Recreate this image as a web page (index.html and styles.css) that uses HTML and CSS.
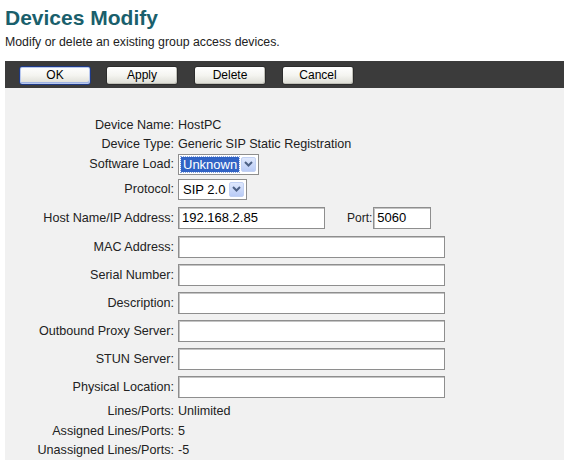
FILE: index.html
```html
<!DOCTYPE html>
<html>
<head>
<meta charset="utf-8">
<link rel="stylesheet" href="styles.css">
</head>
<body>
<h1 class="title">Devices Modify</h1>
<p class="subtitle">Modify or delete an existing group access devices.</p>
<div class="toolbar">
  <button class="btn btn-focus">OK</button>
  <button class="btn">Apply</button>
  <button class="btn">Delete</button>
  <button class="btn">Cancel</button>
</div>
<div class="panel">
  <div class="form">
    <div class="lbl r-text">Device Name:</div><div class="val r-text">HostPC</div>
    <div class="lbl r-text">Device Type:</div><div class="val r-text">Generic SIP Static Registration</div>
    <div class="lbl r-sel1">Software Load:</div>
    <div class="val r-sel1">
      <div class="select sel-sw"><span class="sel-text sel-hl">Unknown</span><span class="sel-arrow"><svg width="9" height="6" viewBox="0 0 9 6"><path d="M1 1 L4.5 4.5 L8 1" fill="none" stroke="#4d6185" stroke-width="2"/></svg></span></div>
    </div>
    <div class="lbl r-sel2">Protocol:</div>
    <div class="val r-sel2">
      <div class="select sel-proto"><span class="sel-text">SIP 2.0</span><span class="sel-arrow"><svg width="9" height="6" viewBox="0 0 9 6"><path d="M1 1 L4.5 4.5 L8 1" fill="none" stroke="#4d6185" stroke-width="2"/></svg></span></div>
    </div>
    <div class="lbl r-host">Host Name/IP Address:</div>
    <div class="val r-host">
      <div class="input in-host">192.168.2.85</div>
      <span class="port-lbl">Port:</span>
      <div class="input in-port">5060</div>
    </div>
    <div class="lbl r-field">MAC Address:</div><div class="val r-field"><div class="input in-long"></div></div>
    <div class="lbl r-field">Serial Number:</div><div class="val r-field"><div class="input in-long"></div></div>
    <div class="lbl r-field">Description:</div><div class="val r-field"><div class="input in-long"></div></div>
    <div class="lbl r-field">Outbound Proxy Server:</div><div class="val r-field"><div class="input in-long"></div></div>
    <div class="lbl r-field">STUN Server:</div><div class="val r-field"><div class="input in-long"></div></div>
    <div class="lbl r-field">Physical Location:</div><div class="val r-field"><div class="input in-long"></div></div>
    <div class="lbl r-lines">Lines/Ports:</div><div class="val r-lines">Unlimited</div>
    <div class="lbl r-text">Assigned Lines/Ports:</div><div class="val r-text">5</div>
    <div class="lbl r-text">Unassigned Lines/Ports:</div><div class="val r-text">-5</div>
  </div>
</div>
</body>
</html>
```

FILE: styles.css
```css
html, body {
  margin: 0;
  padding: 0;
  background: #ffffff;
  font-family: "Liberation Sans", Arial, sans-serif;
  font-size: 12px;
  color: #222;
}

.title {
  margin: 0;
  padding: 5px 0 0 5px;
  height: 26px;
  font-size: 21px;
  line-height: 26px;
  font-weight: bold;
  color: #1a5f6c;
}

.subtitle {
  margin: 0;
  padding: 3px 0 0 5px;
  height: 27px;
  line-height: 16px;
  font-size: 12.3px;
  color: #222;
}

.toolbar {
  margin-left: 5px;
  height: 27px;
  background: #3b3b3b;
  display: flex;
  align-items: flex-start;
  padding: 5px 0 0 14px;
  box-sizing: border-box;
  gap: 15px;
}

.btn {
  width: 72px;
  height: 19px;
  padding: 0;
  margin: 0;
  border: 1px solid #2c2c2c;
  border-radius: 3px;
  background: linear-gradient(#ffffff 0%, #f4f4f0 50%, #dcdcd4 100%);
  font-family: "Liberation Sans", Arial, sans-serif;
  font-size: 12px;
  color: #000;
  line-height: 17px;
  box-shadow: inset -1px -1px 0 #c0c0b8;
}

.btn + .btn + .btn {
  margin-left: 1px;
}

.btn-focus {
  border-color: #1f3a86;
  box-shadow: inset 0 0 0 1px #b8c8ee, inset -1px -2px 0 #9fb3e3;
}

.panel {
  margin-left: 5px;
  height: 372px;
  background: #f1f1f1;
  padding-top: 27px;
  box-sizing: border-box;
  font-size: 12.6px;
}

.form {
  display: grid;
  grid-template-columns: 169px 1fr;
  column-gap: 4px;
}

.lbl {
  display: flex;
  align-items: center;
  justify-content: flex-end;
  white-space: nowrap;
}

.val {
  display: flex;
  align-items: center;
  white-space: nowrap;
}

.r-text { height: 19px; }
.r-sel1 { height: 22px; }
.r-sel2 { height: 28px; }
.r-host { height: 30px; }
.r-field { height: 28px; }
.r-lines { height: 20px; }

.input {
  height: 22px;
  box-sizing: border-box;
  background: #fff;
  border: 1px solid #8e8e8e;
  box-shadow: inset 1px 1px 0 #c4c4c4;
  line-height: 20px;
  padding-left: 3px;
  color: #000;
  font-size: 13px;
}

.in-host { width: 147px; }
.in-port { width: 58px; }
.in-long { width: 267px; }

.port-lbl {
  margin-left: 22px;
  margin-right: 1px;
  font-size: 12px;
}

.select {
  height: 21px;
  box-sizing: border-box;
  background: #fff;
  border: 1px solid #8e8e8e;
  display: flex;
  align-items: center;
  padding: 0 2px 0 2px;
  justify-content: space-between;
}

.sel-sw { width: 81px; }
.sel-proto { width: 69px; }

.sel-text {
  color: #000;
  line-height: 15px;
  padding: 0 2px;
}

.sel-hl {
  background: #3163c5;
  color: #fff;
  outline: 1px dotted #8aa6dd;
}

.select .sel-text { font-size: 13px; }

.sel-arrow {
  width: 15px;
  height: 15px;
  box-sizing: border-box;
  background: linear-gradient(#dfe8fd, #b9cbf6);
  border: 1px solid #c2d1f3;
  border-radius: 2px;
  display: flex;
  align-items: center;
  justify-content: center;
}
```
